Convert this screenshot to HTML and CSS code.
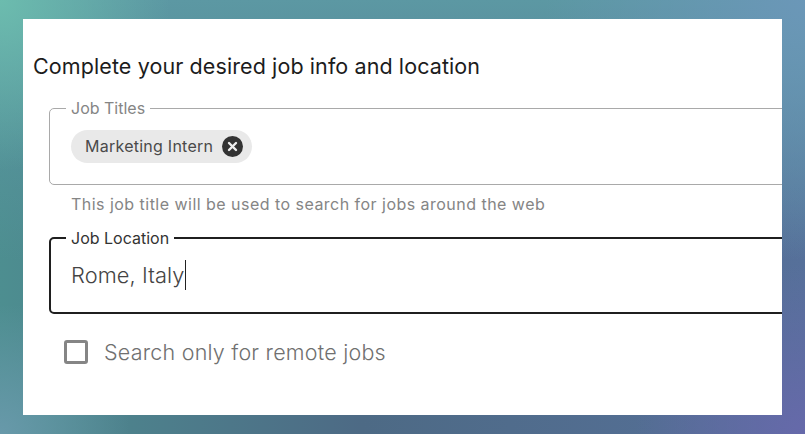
FILE: index.html
```html
<!DOCTYPE html>
<html lang="en">
<head>
<meta charset="utf-8">
<title>Job info</title>
<link rel="stylesheet" href="styles.css">
</head>
<body>
<main class="panel">
  <h1 class="title">Complete your desired job info and location</h1>
  <div class="fields">
    <fieldset class="field">
      <legend class="legend">Job Titles</legend>
      <span class="chip">
        <span class="chip-text">Marketing Intern</span>
        <svg class="chip-x" viewBox="0 0 21 21" aria-hidden="true"><circle cx="10.5" cy="10.5" r="10.5" fill="#333"/><path d="M7 7l7 7M14 7l-7 7" stroke="#eee" stroke-width="2.4" stroke-linecap="round"/></svg>
      </span>
    </fieldset>
    <p class="help">This job title will be used to search for jobs around the web</p>
    <fieldset class="field field-active">
      <legend class="legend">Job Location</legend>
      <div class="value"><span>Rome, Italy</span><i class="caret"></i></div>
    </fieldset>
    <label class="check">
      <span class="box"></span>
      <span class="check-text">Search only for remote jobs</span>
    </label>
  </div>
</main>
</body>
</html>
```
FILE: styles.css
```css
* { box-sizing: border-box; }
html, body { margin: 0; height: 434px; overflow: hidden; }
body {
  padding: 19px 23px;
  font-family: "Inter", "Noto Sans", sans-serif;
  background:
    radial-gradient(circle at 0 0, #6cbcae 0, rgba(108,188,174,0) 170px),
    radial-gradient(circle at 100% 100%, #6669aa 0, rgba(102,105,170,0) 170px),
    radial-gradient(circle at 100% 0, #6b97b8 0, rgba(107,151,184,0) 260px),
    radial-gradient(circle at 0 100%, #6899aa 0, rgba(104,153,170,0) 130px),
    linear-gradient(to bottom, rgba(92,152,163,1) 0, rgba(92,152,163,0) 60%),
    linear-gradient(to right, #4d8e90 0, #4d6a85 45%, #56709a 100%);
}
.panel {
  width: 759px;
  height: 396px;
  background: #fff;
  overflow: hidden;
  padding: 33px 0 0 10px;
}
.title {
  margin: 0;
  font-size: 21.5px;
  line-height: 29px;
  font-weight: 400;
  letter-spacing: .1px;
  color: #1c1c1c;
}
.fields { margin: 18px 0 0 16px; width: 780px; }
.field {
  margin: 0;
  border: 1px solid #a9a9a9;
  border-radius: 5px;
  padding: 0 0 0 21px;
  height: 86px;
}
.legend {
  padding: 0 5px;
  margin-left: -5px;
  font-size: 16px;
  line-height: 18px;
  color: #858585;
}
.chip {
  display: inline-flex;
  align-items: center;
  gap: 9px;
  height: 33px;
  margin-top: 13px;
  padding: 0 9px 0 14px;
  background: #e9e9e9;
  border-radius: 17px;
}
.chip-text { font-size: 16px; line-height: 18px; margin-top: -2px; letter-spacing: .25px; color: #4a4a4a; }
.chip-x { width: 21px; height: 21px; }
.help {
  margin: 9px 0 0 22px;
  font-size: 16px;
  line-height: 20px;
  letter-spacing: .47px;
  color: #858585;
}
.field-active {
  margin-top: 15px;
  border: 2px solid #1f1f1f;
  padding-left: 20px;
  height: 85px;
}
.field-active .legend { color: #333; }
.value {
  display: flex;
  align-items: center;
  height: 36px;
  margin-top: 10px;
  font-size: 21.8px;
  font-weight: 300;
  letter-spacing: .1px;
  color: #444;
}
.caret { width: 1px; height: 30px; background: #222; }
.check {
  display: flex;
  align-items: center;
  gap: 16px;
  margin: 25px 0 0 15px;
}
.box {
  width: 24px;
  height: 24px;
  border: 3px solid #858585;
  border-radius: 3px;
}
.check-text { font-size: 21.5px; font-weight: 300; letter-spacing: .22px; color: #707070; }
```
